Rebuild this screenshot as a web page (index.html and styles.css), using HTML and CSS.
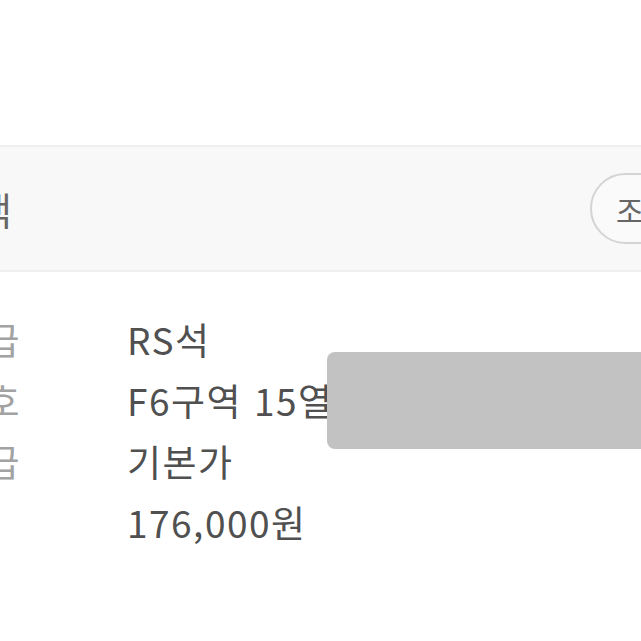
FILE: index.html
```html
<!DOCTYPE html>
<html lang="ko">
<head>
    <meta charset="UTF-8">
    <meta name="viewport" content="width=device-width, initial-scale=1.0">
    <title>좌석 정보</title>
    <link rel="stylesheet" href="styles.css">
</head>
<body>
    <div class="page">
        <div class="top"></div>

        <div class="band">
            <h2>좌석선택</h2>
            <button class="pill">조회</button>
        </div>

        <div class="info">
            <div class="label">좌석등급</div>
            <div class="value">RS석</div>
            <div class="label">좌석번호</div>
            <div class="value">F6구역 15열</div>
            <div class="label">가격등급</div>
            <div class="value">기본가</div>
            <div class="label">가격</div>
            <div class="value">176,000원</div>
        </div>

        <div class="mask"></div>
    </div>
</body>
</html>
```

FILE: styles.css
```css
body {
    margin: 0;
    overflow: hidden;
    background-color: #fff;
    font-family: "Noto Sans CJK KR", "Noto Sans", sans-serif;
}
.page {
    position: relative;
    width: 641px;
    height: 641px;
    overflow: hidden;
}
.top {
    height: 145px;
}
.band {
    display: flex;
    align-items: center;
    justify-content: space-between;
    height: 123px;
    margin-left: -128px;
    margin-right: -69px;
    background-color: #f8f8f8;
    border-top: 2px solid #efefef;
    border-bottom: 2px solid #efefef;
}
.band h2 {
    flex-shrink: 0;
    margin: 0;
    font-size: 38px;
    font-weight: normal;
    line-height: 1;
    color: #666;
    white-space: nowrap;
}
.pill {
    width: 120px;
    height: 71px;
    padding: 0 0 0 24px;
    text-align: left;
    font-family: inherit;
    font-size: 30px;
    color: #666;
    background-color: #fafafa;
    border: 2px solid #d4d4d4;
    border-radius: 36px;
}
.info {
    display: grid;
    grid-template-columns: 248px 1fr;
    margin-top: 37px;
    margin-left: -121px;
    font-size: 37px;
    line-height: 61px;
    letter-spacing: 1.5px;
}
.label {
    color: #a2a2a2;
    white-space: nowrap;
}
.value {
    color: #505050;
    white-space: nowrap;
}
.mask {
    position: absolute;
    left: 327px;
    top: 352px;
    width: 340px;
    height: 97px;
    background-color: #c2c2c2;
    border-radius: 8px;
}
```
